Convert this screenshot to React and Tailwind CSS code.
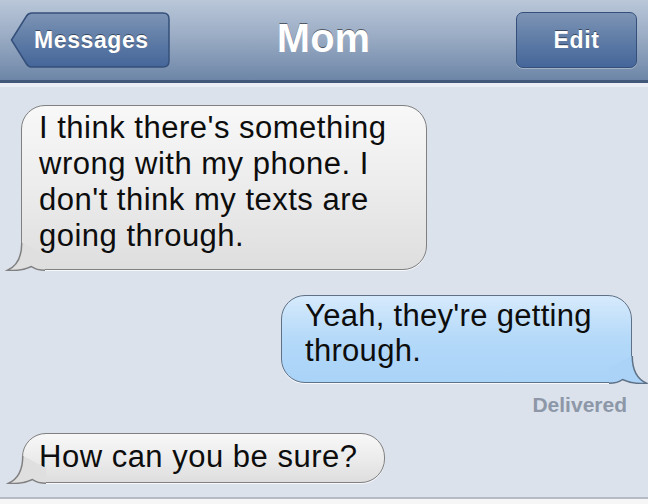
import React from "react";

const font = { fontFamily: '"Liberation Sans", Arial, Helvetica, sans-serif' };

function Tail({ fill, stroke, right = false }) {
  return (
    <svg
      width="40"
      height="30"
      viewBox="0 0 40 30"
      className={
        right
          ? "absolute bottom-[-1.5px] right-[-17.5px] scale-x-[-1]"
          : "absolute bottom-[-1.5px] left-[-17.5px]"
      }
    >
      <path
        d="M16.75 2 C16.75 17 12 25 2.5 29.2 C11 30 20 28.5 26.5 25.5 C30 28.2 34 29.25 40 29.25 L40 14 L17.5 2 Z"
        fill={fill}
      />
      <path
        d="M16.75 2 C16.75 17 12 25 2.5 29.2 C11 30 20 28.5 26.5 25.5 C30 28.2 34 29.25 40 29.25"
        fill="none"
        stroke={stroke}
        strokeWidth="1.5"
      />
    </svg>
  );
}

function GrayBubble({ children, className }) {
  return (
    <div
      className={`relative rounded-[24px] border-[1.5px] border-[#808080] bg-gradient-to-b from-[#f8f8f8] via-[#ececec] to-[#dedede] text-[31px] leading-[36px] tracking-[0.5px] text-[#0d0d0d] shadow-[0_1px_0_rgba(255,255,255,0.8)] ${className}`}
    >
      {children}
      <Tail fill="#dfdfdf" stroke="#808080" />
    </div>
  );
}

export default function App() {
  return (
    <div className="flex h-[504px] w-[648px] flex-col overflow-hidden bg-[#dbe2ec]" style={font}>
      {/* nav bar */}
      <div className="grid h-[83px] grid-cols-[1fr_auto_1fr] items-center border-b-[3px] border-[#41577a] bg-gradient-to-b from-[#bac7d9] via-[#97a9c2] to-[#6d86a7] pl-[10px] pr-[11px]">
        <div className="relative flex h-[56px] w-[160px] items-center pl-[24px]">
          <svg width="160" height="56" viewBox="0 0 160 56" className="absolute inset-0">
            <defs>
              <linearGradient id="btn" x1="0" y1="0" x2="0" y2="1">
                <stop offset="0" stopColor="#7d94b5" />
                <stop offset="0.5" stopColor="#5f7ca6" />
                <stop offset="1" stopColor="#45669a" />
              </linearGradient>
            </defs>
            <path
              d="M1.5 28 L16.5 4 Q18.5 1 22 1 L153 1 Q159 1 159 7 L159 49 Q159 55 153 55 L22 55 Q18.5 55 16.5 52 Z"
              fill="url(#btn)"
              stroke="#34507a"
              strokeWidth="1.5"
            />
          </svg>
          <span className="relative text-[23px] font-bold tracking-[0.6px] text-white [text-shadow:0_-1px_0_rgba(0,0,0,0.45)]">
            Messages
          </span>
        </div>
        <div className="pb-[4px] text-[40px] font-bold leading-none text-white [text-shadow:0_-1px_0_rgba(0,0,0,0.5)]">
          Mom
        </div>
        <div className="flex justify-end">
          <div className="flex h-[56px] w-[121px] items-center justify-center rounded-[7px] border-[1.5px] border-[#34507a] bg-gradient-to-b from-[#7d94b5] via-[#5f7ca6] to-[#45669a] shadow-[0_1px_0_rgba(255,255,255,0.3)]">
            <span className="text-[23px] font-bold tracking-[0.6px] text-white [text-shadow:0_-1px_0_rgba(0,0,0,0.45)]">
              Edit
            </span>
          </div>
        </div>
      </div>
      <div className="h-[4px] bg-[#eaeef4]" />

      {/* conversation */}
      <div className="flex flex-1 flex-col">
        <GrayBubble className="ml-[21px] mt-[18px] h-[165px] w-[406px] pl-[17px] pt-[4px]">
          I think there's something
          <br />
          wrong with my phone. I
          <br />
          don't think my texts are
          <br />
          going through.
        </GrayBubble>

        <div className="relative mr-[16px] mt-[25px] h-[88px] w-[351px] self-end rounded-[24px] border-[1.5px] border-[#5f7186] bg-gradient-to-b from-[#d6eafc] via-[#b4d9f9] to-[#a9d3f7] pl-[23px] pt-[2px] text-[31px] leading-[35px] tracking-[0.3px] text-[#0d0d0d] shadow-[0_1px_0_rgba(255,255,255,0.8)]">
          Yeah, they're getting
          <br />
          through.
          <Tail fill="#aad3f7" stroke="#5f7186" right />
        </div>

        <div className="mr-[21px] mt-[12px] self-end text-[21px] font-bold leading-[20px] text-[#8d97a7]">
          Delivered
        </div>

        <GrayBubble className="ml-[22px] mt-[18px] h-[50px] w-[363px] pl-[16px] pt-[5px]">
          How can you be sure?
        </GrayBubble>

        <div className="mt-auto h-[7px] border-t-[2px] border-[#b5bbc4] bg-[#f6f6f7]" />
      </div>
    </div>
  );
}
